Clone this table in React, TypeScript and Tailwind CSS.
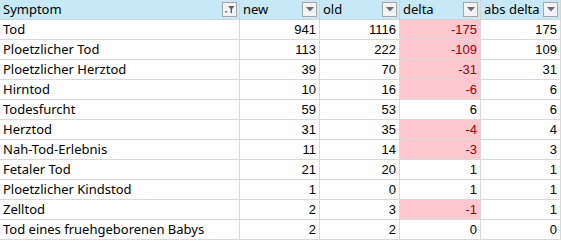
import React from 'react';

const rows: [string, number, number, number][] = [
  ['Tod', 941, 1116, -175],
  ['Ploetzlicher Tod', 113, 222, -109],
  ['Ploetzlicher Herztod', 39, 70, -31],
  ['Hirntod', 10, 16, -6],
  ['Todesfurcht', 59, 53, 6],
  ['Herztod', 31, 35, -4],
  ['Nah-Tod-Erlebnis', 11, 14, -3],
  ['Fetaler Tod', 21, 20, 1],
  ['Ploetzlicher Kindstod', 1, 0, 1],
  ['Zelltod', 2, 3, -1],
  ['Tod eines fruehgeborenen Babys', 2, 2, 0],
];

function FilterButton({ active = false }: { active?: boolean }) {
  return (
    <div className="w-[15px] h-[15px] border border-[#a6a6a6] bg-[#f3f3f3] flex items-center justify-center shrink-0">
      {active ? (
        <svg width="11" height="9" viewBox="0 0 12 10">
          <path d="M0.5 7 L4 7 L2.25 9 Z" fill="#5f5f5f" />
          <path d="M4.5 1 L11.5 1 L8.8 4.5 L8.8 9.5 L7.2 8.5 L7.2 4.5 Z" fill="#5f5f5f" />
        </svg>
      ) : (
        <svg width="8" height="5" viewBox="0 0 8 5">
          <path d="M0 0 L8 0 L4 4.5 Z" fill="#6b6b6b" />
        </svg>
      )}
    </div>
  );
}

const headCell = 'h-[20px] border-r border-b border-[#d4d4d4] bg-[#c6e8f7] flex items-center justify-between pl-[3px] pr-[2px]';
const cell = 'h-[20px] border-r border-b border-[#d9d9d9] flex items-center';

export default function App() {
  return (
    <div className="w-[561px] h-[241px] bg-white overflow-hidden text-[13px] text-black">
      <div className="grid grid-cols-[240px_80px_80px_81px_80px]">
        <div className={headCell}>
          <span className="font-['Noto_Sans',sans-serif]">Symptom</span>
          <FilterButton active />
        </div>
        {['new', 'old', 'delta', 'abs delta'].map((h) => (
          <div key={h} className={headCell}>
            <span className="font-['Noto_Sans',sans-serif]">{h}</span>
            <FilterButton />
          </div>
        ))}
        {rows.map(([name, n, o, d]) => (
          <React.Fragment key={name}>
            <div className={`${cell} pl-[3px] font-['Noto_Sans',sans-serif]`}>{name}</div>
            <div className={`${cell} justify-end pr-[3px] font-['Liberation_Sans',sans-serif]`}>{n}</div>
            <div className={`${cell} justify-end pr-[3px] font-['Liberation_Sans',sans-serif]`}>{o}</div>
            <div
              className={`${cell} justify-end pr-[3px] font-['Liberation_Sans',sans-serif] ${
                d < 0 ? 'bg-[#ffc7ce] text-[#9c0006]' : ''
              }`}
            >
              {d}
            </div>
            <div className={`${cell} justify-end pr-[3px] font-['Liberation_Sans',sans-serif]`}>{Math.abs(d)}</div>
          </React.Fragment>
        ))}
      </div>
    </div>
  );
}
